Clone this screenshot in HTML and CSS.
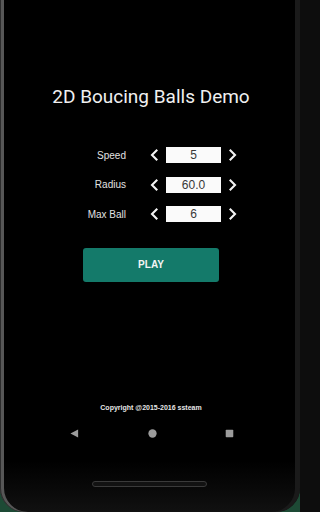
FILE: index.html
```html
<!DOCTYPE html>
<html>
<head>
<meta charset="utf-8">
<link rel="stylesheet" href="styles.css">
</head>
<body>
<div class="phone">
  <div class="screen">
    <h1 class="title">2D Boucing Balls Demo</h1>
    <div class="settings">
      <div class="row">
        <span class="label">Speed</span>
        <svg class="chev chev-left" viewBox="0 0 10 12"><path d="M7.5 1.5 L3 6 L7.5 10.5"/></svg>
        <span class="box">5</span>
        <svg class="chev chev-right" viewBox="0 0 10 12"><path d="M2.5 1.5 L7 6 L2.5 10.5"/></svg>
      </div>
      <div class="row">
        <span class="label">Radius</span>
        <svg class="chev chev-left" viewBox="0 0 10 12"><path d="M7.5 1.5 L3 6 L7.5 10.5"/></svg>
        <span class="box">60.0</span>
        <svg class="chev chev-right" viewBox="0 0 10 12"><path d="M2.5 1.5 L7 6 L2.5 10.5"/></svg>
      </div>
      <div class="row">
        <span class="label">Max Ball</span>
        <svg class="chev chev-left" viewBox="0 0 10 12"><path d="M7.5 1.5 L3 6 L7.5 10.5"/></svg>
        <span class="box">6</span>
        <svg class="chev chev-right" viewBox="0 0 10 12"><path d="M2.5 1.5 L7 6 L2.5 10.5"/></svg>
      </div>
    </div>
    <div class="play">PLAY</div>
    <div class="copyright">Copyright @2015-2016 ssteam</div>
    <div class="nav">
      <svg class="nav-icon back" viewBox="0 0 10 10"><path d="M0.5 5 L9 0.5 L9 9.5 Z"/></svg>
      <svg class="nav-icon home" viewBox="0 0 10 10"><circle cx="5" cy="5" r="4.6"/></svg>
      <svg class="nav-icon recent" viewBox="0 0 10 10"><rect x="0.8" y="0.8" width="8.4" height="8.4" rx="0.8"/></svg>
    </div>
    <div class="slot"></div>
  </div>
</div>
</body>
</html>
```
FILE: styles.css
```css
html {
  margin: 0;
  padding: 0;
  background: #0d0d0d;
}
body {
  margin: 0;
  padding: 0;
  background: #1d4a35;
  width: 300px;
  height: 512px;
  overflow: hidden;
}
.phone {
  width: 300px;
  height: 512px;
  border-radius: 0 0 24px 24px;
  background: linear-gradient(to bottom, #000 0%, #000 90%, #080808 95%, #111 100%);
  box-shadow: inset 1px 0 0 #2c2c2c, inset 4px 0 0 #575757, inset -5px 0 0 #1a1a1a;
  overflow: hidden;
}
.screen {
  display: flex;
  flex-direction: column;
  padding-top: 85px;
}
.title {
  margin: 0;
  padding-left: 2px;
  font-family: Roboto, "Noto Sans", sans-serif;
  font-weight: 400;
  font-size: 19px;
  line-height: 24px;
  color: #f0f0f0;
  text-align: center;
}
.settings {
  margin-top: 38px;
  display: flex;
  flex-direction: column;
  gap: 13.5px;
}
.row {
  display: flex;
  align-items: center;
  height: 16px;
}
.label {
  width: 126px;
  text-align: right;
  font-family: "Liberation Sans", Arial, sans-serif;
  font-size: 10px;
  color: #e2e2e2;
}
.chev {
  width: 10px;
  height: 12px;
  fill: none;
  stroke: #f4f4f4;
  stroke-width: 2.1;
  stroke-linecap: square;
}
.chev-left {
  margin-left: 23px;
}
.box {
  margin-left: 7px;
  width: 55px;
  height: 16px;
  background: #fafafa;
  color: #383838;
  font-family: "Liberation Sans", Arial, sans-serif;
  font-size: 12px;
  line-height: 17px;
  text-align: center;
}
.chev-right {
  margin-left: 7px;
}
.play {
  margin-top: 26px;
  margin-left: 83px;
  width: 136px;
  height: 34px;
  border-radius: 3px;
  background: #147a6a;
  color: #f4f4f4;
  font-family: "Liberation Sans", Arial, sans-serif;
  font-weight: 700;
  font-size: 10px;
  line-height: 34px;
  text-align: center;
}
.copyright {
  margin-top: 121px;
  font-family: "Liberation Sans", Arial, sans-serif;
  font-weight: 700;
  font-size: 7px;
  line-height: 10px;
  color: #e6e6e6;
  text-align: center;
  padding-left: 2px;
}
.nav {
  margin-top: 15px;
  height: 10px;
  display: flex;
  align-items: center;
}
.nav-icon {
  width: 9px;
  height: 9px;
  fill: #9c9c9c;
}
.back {
  margin-left: 70px;
}
.home {
  margin-left: 69px;
}
.recent {
  margin-left: 68px;
}
.slot {
  margin-top: 43px;
  margin-left: 92px;
  width: 115px;
  height: 6px;
  border-radius: 3px;
  border: 1px solid #3a3a3a;
  background: #121212;
  box-sizing: border-box;
}
```
